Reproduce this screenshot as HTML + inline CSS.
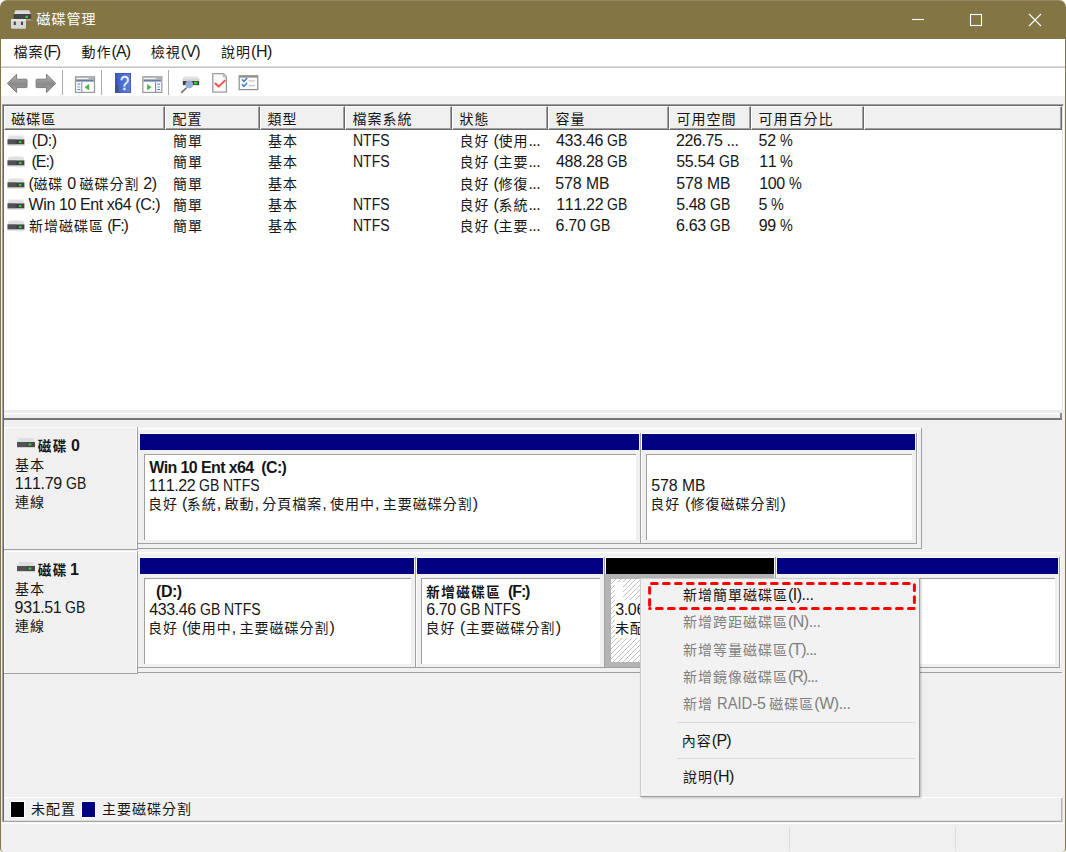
<!DOCTYPE html>
<html lang="zh-Hant">
<head>
<meta charset="utf-8">
<title>磁碟管理</title>
<style>
html,body{margin:0;padding:0;}
body{width:1066px;height:852px;overflow:hidden;background:#fff;position:relative;
  font-family:"Liberation Sans","Noto Sans CJK TC",sans-serif;font-size:15px;color:#161616;font-kerning:none;}
.a{position:absolute;}
.t{position:absolute;white-space:nowrap;line-height:20px;height:20px;font-size:16px;letter-spacing:-0.45px;}
.b{font-weight:bold;}
.c{font-size:14px;letter-spacing:1px;}
.b .c{font-size:13.5px;letter-spacing:1.5px;}
.u{display:inline-block;letter-spacing:0;transform:scaleX(.875);transform-origin:0 50%;}
#client{left:0;top:39px;width:1066px;height:813px;box-sizing:border-box;background:#f0f0f0;border-left:1px solid #847544;border-right:1px solid #847544;border-radius:0 0 4px 4px;}
#title{left:0;top:0;width:1066px;height:39px;background:#847544;border-radius:7px 7px 0 0;box-shadow:inset 0 1px 0 rgba(255,255,255,.13);}
#title .cap{left:36.5px;top:9px;color:#fff;}
#menubar{left:1px;top:39px;width:1064px;height:27px;background:#fff;}
#menuline{left:1px;top:66px;width:1064px;height:2px;background:linear-gradient(#d9dadb 0,#d9dadb 50%,#c6c8ca 50%,#c6c8ca 100%);}
#toolbar{left:1px;top:68px;width:1064px;height:28px;background:#fff;}
.sep{position:absolute;top:70px;width:1px;height:25px;background:#adadad;}
#list{left:2px;top:104px;width:1062px;height:306px;background:#fff;box-sizing:border-box;
  border-top:1px solid #a0a0a0;border-left:1px solid #a0a0a0;border-right:1px solid #fff;
  box-shadow:inset 1px 1px 0 #696969, inset -1px 0 0 #e3e3e3;}
.hc{position:absolute;top:106px;height:24px;box-sizing:border-box;background:#f0f0f0;
  border-top:1px solid #fff;border-left:1px solid #fff;border-right:1px solid #696969;border-bottom:1px solid #696969;
  box-shadow:inset -1px -1px 0 #a0a0a0;}

.hatch{background-color:#fff;background-image:repeating-linear-gradient(135deg,#fff 0,#fff 2.86px,#c2c2c2 2.86px,#c2c2c2 3.536px);}
#cm{left:640px;top:578px;width:280px;height:219px;box-sizing:border-box;background:#f2f2f2;border:1px solid #cfcfcf;border-right-color:#9a9a9a;border-bottom-color:#9a9a9a;box-shadow:1px 1px 2px rgba(0,0,0,.25);}
</style>
</head>
<body>
<div id="client" class="a"></div>
<div id="title" class="a"><div class="t cap"><span class="c">磁碟管理</span></div></div>
<div id="menubar" class="a"></div><div id="menuline" class="a"></div><div id="toolbar" class="a"></div>
<div class="t" style="left:13.6px;top:42px;letter-spacing:-1.46px"><span class="c">檔案</span>(F)</div>
<div class="t" style="left:81.6px;top:42px;letter-spacing:-0.92px"><span class="c">動作</span>(A)</div>
<div class="t" style="left:150.8px;top:42px;letter-spacing:-0.73px"><span class="c">檢視</span>(V)</div>
<div class="t" style="left:221.0px;top:42px;letter-spacing:-0.41px"><span class="c">說明</span>(H)</div>
<div class="sep" style="left:62px"></div>
<div class="sep" style="left:101px"></div>
<div class="sep" style="left:168px"></div>
<svg class="a" style="left:10px;top:9px" width="22" height="21" viewBox="10 9 22 21"><path d="M15.5 10.2h13.5l2 4H13.8z" fill="#d9dbdd"/><rect x="13.7" y="14" width="17.4" height="5.6" fill="#454547"/><rect x="13.7" y="19.3" width="17.4" height="1" fill="#c9c9c9"/><rect x="25.4" y="15.8" width="2.4" height="2.2" fill="#35d335"/><rect x="11" y="19.2" width="15" height="9.6" rx="1" fill="#d6d6d6"/><rect x="11" y="19.2" width="15" height="1.6" fill="#ececec"/><rect x="13.8" y="21.6" width="2" height="3.4" fill="#444"/><rect x="21" y="21.6" width="2" height="3.4" fill="#444"/></svg>
<svg class="a" style="left:900px;top:0" width="166" height="39" viewBox="900 0 166 39" fill="none" stroke="#fff" stroke-width="1.1"><path d="M912 19.5h12"/><rect x="970.5" y="14.5" width="11" height="11"/><path d="M1029 14l12 12M1041 14l-12 12"/></svg>
<svg class="a" style="left:0;top:67px" width="270" height="29" viewBox="0 67 270 29"><defs><linearGradient id="ga" x1="0" y1="0" x2="0" y2="1"><stop offset="0" stop-color="#b4b4b4"/><stop offset=".55" stop-color="#8a8a8a"/><stop offset="1" stop-color="#a8a8a8"/></linearGradient><linearGradient id="gh" x1="0" y1="0" x2="1" y2="0"><stop offset="0" stop-color="#3a4fb8"/><stop offset=".3" stop-color="#4a68cf"/><stop offset="1" stop-color="#5b80dc"/></linearGradient></defs><path d="M7.3 83.4L16.6 74.3V79.2H26.2a.8.8 0 0 1 .8.8V86.8a.8.8 0 0 1-.8.8H16.6V92.5z" fill="url(#ga)" stroke="#7d7d7d" stroke-width="1" stroke-linejoin="round"/><path d="M55.8 83.4L46.5 74.3V79.2H36.9a.8.8 0 0 0-.8.8V86.8a.8.8 0 0 0 .8.8H46.5V92.5z" fill="url(#ga)" stroke="#7d7d7d" stroke-width="1" stroke-linejoin="round"/><rect x="75.5" y="76.8" width="19" height="15.6" fill="#fff" stroke="#979797" stroke-width="1.2"/><rect x="76" y="77.3" width="18" height="4.8" fill="#aab0b8"/><rect x="76.5" y="78" width="12" height="1" fill="#f4f4f4"/><rect x="76.5" y="80" width="17" height="1" fill="#5f7fa8"/><rect x="81.2" y="82.2" width="1.1" height="10" fill="#8d97a5"/><rect x="77.3" y="83.6" width="3" height="1.1" fill="#4f86c9"/><rect x="77.3" y="86.4" width="3" height="1.1" fill="#7ea6d6"/><rect x="77.3" y="89" width="3" height="1.1" fill="#4f86c9"/><path d="M84.6 87.3L89.2 83.8V90.6z" fill="#49b649"/><rect x="115.4" y="73.4" width="15.2" height="19" fill="url(#gh)" stroke="#3446ae" stroke-width=".8"/><rect x="115" y="85" width="3.4" height="7.8" fill="#3a5580"/><text x="124.6" y="89.8" font-family="Liberation Sans,sans-serif" font-size="20" fill="#eef2fb" stroke="#eef2fb" stroke-width=".3" text-anchor="middle" transform="translate(124.6 0) scale(.82 1) translate(-124.6 0)">?</text><rect x="142.8" y="76.8" width="19" height="15.6" fill="#fff" stroke="#979797" stroke-width="1.2"/><rect x="143.3" y="77.3" width="18" height="4.8" fill="#aab0b8"/><rect x="143.8" y="78" width="12" height="1" fill="#f4f4f4"/><rect x="143.8" y="80" width="17" height="1" fill="#5f7fa8"/><rect x="155" y="82.2" width="1.1" height="10" fill="#6d87a8"/><rect x="157.2" y="83.6" width="3" height="1.1" fill="#4f86c9"/><rect x="157.2" y="86.4" width="3" height="1.1" fill="#7ea6d6"/><rect x="157.2" y="89" width="3" height="1.1" fill="#4f86c9"/><path d="M151.4 87.3L147.2 83.8V90.6z" fill="#49b649"/><path d="M184 76.6h13.6l1.6 2.6h-16.8z" fill="#dfe1e3"/><rect x="182.4" y="79" width="17.2" height="6.8" fill="#d4d6d8"/><rect x="183" y="81" width="16" height="4" fill="#3f3f41"/><rect x="194" y="81.6" width="3.4" height="2.8" fill="#28d428"/><path d="M186.2 88L181.6 92.4" stroke="#6a6f78" stroke-width="1.6" stroke-linecap="round"/><circle cx="189.2" cy="84.4" r="3.5" fill="#8fb2de" stroke="#9fb0c8" stroke-width="1"/><path d="M212.8 73.6H223.5L226.4 76.6V92.2H212.8z" fill="#fafafa" stroke="#9a9a9a" stroke-width="1.3" stroke-linejoin="round"/><path d="M223.2 73.8V76.9H226.2" fill="none" stroke="#b0b0b0" stroke-width="1"/><path d="M215.4 83.6L218.7 86.6L224.8 80.6" fill="none" stroke="#f0524f" stroke-width="2" stroke-linecap="round" stroke-linejoin="round"/><rect x="239.2" y="75.8" width="18.6" height="13.8" fill="#fbfbfb" stroke="#8e8e8e" stroke-width="1.2"/><rect x="239.2" y="75.8" width="18.6" height="1.8" fill="#8e8e8e"/><path d="M242.3 79.8L243.8 81.4L246.6 78.4M242.3 84.8L243.8 86.4L246.6 83.4" fill="none" stroke="#3f7ad6" stroke-width="1.5" stroke-linecap="round" stroke-linejoin="round"/><path d="M248.6 80.8h6.2M248.6 85.7h6.2" stroke="#c9c9c9" stroke-width="1.2"/></svg>
<div id="list" class="a"></div>
<div class="hc" style="left:4px;width:161px"></div>
<div class="t" style="left:11.3px;top:109px"><span class="c">磁碟區</span></div>
<div class="hc" style="left:165px;width:95px"></div>
<div class="t" style="left:172.5px;top:109px"><span class="c">配置</span></div>
<div class="hc" style="left:260px;width:85px"></div>
<div class="t" style="left:267.5px;top:109px"><span class="c">類型</span></div>
<div class="hc" style="left:345px;width:107px"></div>
<div class="t" style="left:352.5px;top:109px"><span class="c">檔案系統</span></div>
<div class="hc" style="left:452px;width:96px"></div>
<div class="t" style="left:459.5px;top:109px"><span class="c">狀態</span></div>
<div class="hc" style="left:548px;width:121px"></div>
<div class="t" style="left:555.5px;top:109px"><span class="c">容量</span></div>
<div class="hc" style="left:669px;width:82px"></div>
<div class="t" style="left:676.5px;top:109px"><span class="c">可用空間</span></div>
<div class="hc" style="left:751px;width:113px"></div>
<div class="t" style="left:758.5px;top:109px"><span class="c">可用百分比</span></div>
<div class="hc" style="left:864px;width:198px"></div>
<svg class="a" style="left:7px;top:135.2px" width="18" height="12" viewBox="0 0 18 12"><path d="M2 0.6h14l1.6 4H0.4z" fill="#dfe1e3"/><rect x="0.6" y="4.4" width="16.8" height="5.2" fill="#444446"/><rect x="0.6" y="4.4" width="8" height="5.2" fill="#5a5a5c" opacity=".6"/><rect x="0.6" y="9.4" width="16.8" height="1.2" fill="#d4d4d4"/><rect x="12" y="5.9" width="2.4" height="2.2" fill="#2fd22f"/></svg>
<div class="t" style="left:27.8px;top:131.2px;letter-spacing:-0.45px">&nbsp;(D:)</div>
<div class="t" style="left:173px;top:131.2px"><span class="c">簡單</span></div>
<div class="t" style="left:268px;top:131.2px"><span class="c">基本</span></div>
<div class="t" style="left:352.6px;top:131.2px;letter-spacing:-0.45px"><span class="u" style="margin-right:-0.326em">NTFS</span></div>
<div class="t" style="left:459.6px;top:131.2px;letter-spacing:-0.49px"><span class="c">良好</span> (<span class="c">使用</span>...</div>
<div class="t" style="left:556.0px;top:131.2px;letter-spacing:-0.31px">433.46 <span class="u" style="margin-right:-0.181em">GB</span></div>
<div class="t" style="left:676.1px;top:131.2px;letter-spacing:-0.42px">226.75 ...</div>
<div class="t" style="left:758.6px;top:131.2px;letter-spacing:-0.27px">52 <span class="u" style="transform:scaleX(0.898);margin-right:-0.091em">%</span></div>
<svg class="a" style="left:7px;top:156.45px" width="18" height="12" viewBox="0 0 18 12"><path d="M2 0.6h14l1.6 4H0.4z" fill="#dfe1e3"/><rect x="0.6" y="4.4" width="16.8" height="5.2" fill="#444446"/><rect x="0.6" y="4.4" width="8" height="5.2" fill="#5a5a5c" opacity=".6"/><rect x="0.6" y="9.4" width="16.8" height="1.2" fill="#d4d4d4"/><rect x="12" y="5.9" width="2.4" height="2.2" fill="#2fd22f"/></svg>
<div class="t" style="left:28.0px;top:152.45px;letter-spacing:-0.98px">&nbsp;(E:)</div>
<div class="t" style="left:173px;top:152.45px"><span class="c">簡單</span></div>
<div class="t" style="left:268px;top:152.45px"><span class="c">基本</span></div>
<div class="t" style="left:352.6px;top:152.45px;letter-spacing:-0.45px"><span class="u" style="margin-right:-0.326em">NTFS</span></div>
<div class="t" style="left:459.6px;top:152.45px;letter-spacing:-0.49px"><span class="c">良好</span> (<span class="c">主要</span>...</div>
<div class="t" style="left:556.0px;top:152.45px;letter-spacing:-0.31px">488.28 <span class="u" style="margin-right:-0.181em">GB</span></div>
<div class="t" style="left:676.2px;top:152.45px;letter-spacing:-0.34px">55.54 <span class="u" style="margin-right:-0.181em">GB</span></div>
<div class="t" style="left:759.2px;top:152.45px;letter-spacing:-0.45px">11 <span class="u" style="transform:scaleX(0.898);margin-right:-0.091em">%</span></div>
<svg class="a" style="left:7px;top:177.7px" width="18" height="12" viewBox="0 0 18 12"><path d="M2 0.6h14l1.6 4H0.4z" fill="#dfe1e3"/><rect x="0.6" y="4.4" width="16.8" height="5.2" fill="#444446"/><rect x="0.6" y="4.4" width="8" height="5.2" fill="#5a5a5c" opacity=".6"/><rect x="0.6" y="9.4" width="16.8" height="1.2" fill="#d4d4d4"/><rect x="12" y="5.9" width="2.4" height="2.2" fill="#2fd22f"/></svg>
<div class="t" style="left:28.6px;top:173.7px;letter-spacing:-0.56px">(<span class="c">磁碟</span> 0 <span class="c">磁碟分割</span> 2)</div>
<div class="t" style="left:173px;top:173.7px"><span class="c">簡單</span></div>
<div class="t" style="left:268px;top:173.7px"><span class="c">基本</span></div>
<div class="t" style="left:459.6px;top:173.7px;letter-spacing:-0.49px"><span class="c">良好</span> (<span class="c">修復</span>...</div>
<div class="t" style="left:555.2px;top:173.7px;letter-spacing:-0.07px">578 <span class="u" style="transform:scaleX(0.979);margin-right:-0.032em">MB</span></div>
<div class="t" style="left:676.2px;top:173.7px;letter-spacing:-0.17px">578 <span class="u" style="transform:scaleX(0.979);margin-right:-0.032em">MB</span></div>
<div class="t" style="left:759.2px;top:173.7px;letter-spacing:-0.40px">100 <span class="u" style="transform:scaleX(0.898);margin-right:-0.091em">%</span></div>
<svg class="a" style="left:7px;top:198.95px" width="18" height="12" viewBox="0 0 18 12"><path d="M2 0.6h14l1.6 4H0.4z" fill="#dfe1e3"/><rect x="0.6" y="4.4" width="16.8" height="5.2" fill="#444446"/><rect x="0.6" y="4.4" width="8" height="5.2" fill="#5a5a5c" opacity=".6"/><rect x="0.6" y="9.4" width="16.8" height="1.2" fill="#d4d4d4"/><rect x="12" y="5.9" width="2.4" height="2.2" fill="#2fd22f"/></svg>
<div class="t" style="left:28.6px;top:194.95px;letter-spacing:-0.42px">Win 10 Ent x64 (C:)</div>
<div class="t" style="left:173px;top:194.95px"><span class="c">簡單</span></div>
<div class="t" style="left:268px;top:194.95px"><span class="c">基本</span></div>
<div class="t" style="left:352.6px;top:194.95px;letter-spacing:-0.45px"><span class="u" style="margin-right:-0.326em">NTFS</span></div>
<div class="t" style="left:459.6px;top:194.95px;letter-spacing:-0.49px"><span class="c">良好</span> (<span class="c">系統</span>...</div>
<div class="t" style="left:556.3px;top:194.95px;letter-spacing:-0.34px">111.22 <span class="u" style="margin-right:-0.181em">GB</span></div>
<div class="t" style="left:676.2px;top:194.95px;letter-spacing:-0.45px">5.48 <span class="u" style="margin-right:-0.181em">GB</span></div>
<div class="t" style="left:758.6px;top:194.95px;letter-spacing:-0.44px">5 <span class="u" style="transform:scaleX(0.898);margin-right:-0.091em">%</span></div>
<svg class="a" style="left:7px;top:220.2px" width="18" height="12" viewBox="0 0 18 12"><path d="M2 0.6h14l1.6 4H0.4z" fill="#dfe1e3"/><rect x="0.6" y="4.4" width="16.8" height="5.2" fill="#444446"/><rect x="0.6" y="4.4" width="8" height="5.2" fill="#5a5a5c" opacity=".6"/><rect x="0.6" y="9.4" width="16.8" height="1.2" fill="#d4d4d4"/><rect x="12" y="5.9" width="2.4" height="2.2" fill="#2fd22f"/></svg>
<div class="t" style="left:29.0px;top:216.2px;letter-spacing:-1.12px"><span class="c">新增磁碟區</span> (F:)</div>
<div class="t" style="left:173px;top:216.2px"><span class="c">簡單</span></div>
<div class="t" style="left:268px;top:216.2px"><span class="c">基本</span></div>
<div class="t" style="left:352.6px;top:216.2px;letter-spacing:-0.45px"><span class="u" style="margin-right:-0.326em">NTFS</span></div>
<div class="t" style="left:459.6px;top:216.2px;letter-spacing:-0.49px"><span class="c">良好</span> (<span class="c">主要</span>...</div>
<div class="t" style="left:555.5px;top:216.2px;letter-spacing:-0.26px">6.70 <span class="u" style="margin-right:-0.181em">GB</span></div>
<div class="t" style="left:676.1px;top:216.2px;letter-spacing:-0.39px">6.63 <span class="u" style="margin-right:-0.181em">GB</span></div>
<div class="t" style="left:758.7px;top:216.2px;letter-spacing:-0.30px">99 <span class="u" style="transform:scaleX(0.898);margin-right:-0.091em">%</span></div>
<div class="a" style="left:2px;top:104px;width:1px;height:718px;background:#a0a0a0"></div>
<div class="a" style="left:3px;top:105px;width:1px;height:717px;background:#696969"></div>
<div class="a" style="left:4px;top:410px;width:1059px;height:3px;background:#ebebeb"></div>
<div class="a" style="left:4px;top:413px;width:1058px;height:1px;background:#fff"></div>
<div class="a" style="left:4px;top:418px;width:1058px;height:2px;background:#767676"></div>
<div class="a" style="left:1060px;top:413px;width:2px;height:6px;background:#888"></div>
<div class="a" style="left:4px;top:427px;width:133px;height:122px;background:#f0f0f0;border-top:1px solid #fff;border-left:1px solid #fff;box-sizing:border-box"></div>
<div class="a" style="left:136px;top:427px;width:1px;height:122px;background:#fff"></div>
<div class="a" style="left:137px;top:427px;width:1px;height:123px;background:#a0a0a0"></div>
<div class="a" style="left:4px;top:549px;width:134px;height:1px;background:#a0a0a0"></div>
<div class="a" style="left:138px;top:428px;width:783px;height:1px;background:#fff"></div>
<div class="a" style="left:138px;top:429px;width:783px;height:1px;background:#f7f7f7"></div>
<div class="a" style="left:138px;top:543px;width:779px;height:1px;background:#a0a0a0"></div>
<div class="a" style="left:138px;top:548px;width:783px;height:1px;background:#a0a0a0"></div>
<svg class="a" style="left:17px;top:438px" width="18" height="10" viewBox="0 0 18 10"><path d="M2 0h14l2 4H0z" fill="#dcdfe2"/><rect x="0" y="4" width="18" height="5" fill="#48484a"/><rect x="0" y="4" width="9" height="5" fill="#5a5a5c" opacity=".6"/><rect x="0" y="9" width="18" height="1" fill="#cfcfcf"/><rect x="11.6" y="5.4" width="2.6" height="2.2" fill="#2fd22f"/></svg>
<div class="t b" style="left:37.8px;top:436px;letter-spacing:-1.16px"><span class="c">磁碟</span> 0</div>
<div class="t" style="left:15px;top:455px"><span class="c">基本</span></div>
<div class="t" style="left:14.8px;top:474px;letter-spacing:-0.30px">111.79 <span class="u" style="margin-right:-0.181em">GB</span></div>
<div class="t" style="left:15px;top:492px"><span class="c">連線</span></div>
<div class="a" style="left:140px;top:433px;width:499px;height:1px;background:#fff"></div>
<div class="a" style="left:140px;top:434px;width:499px;height:16px;background:#000080"></div>
<div class="a" style="left:640px;top:433px;width:1px;height:110px;background:#a0a0a0"></div>
<div class="a" style="left:641px;top:433px;width:1px;height:110px;background:#fbfbfb"></div>
<div class="a" style="left:144px;top:454px;width:492px;height:86px;background:#fff;border-top:1px solid #a0a0a0;border-left:1px solid #a0a0a0;box-sizing:border-box"></div>
<div class="t b" style="left:149.2px;top:458px;letter-spacing:-0.61px">Win 10 Ent x64&nbsp; (C:)</div>
<div class="t" style="left:148.8px;top:475.8px;letter-spacing:-0.44px">111.22 <span class="u" style="margin-right:-0.181em">GB</span> <span class="u" style="margin-right:-0.326em">NTFS</span></div>
<div class="t" style="left:148.0px;top:494.2px;letter-spacing:-0.57px"><span class="c">良好</span> (<span class="c">系統</span>, <span class="c">啟動</span>, <span class="c">分頁檔案</span>, <span class="c">使用中</span>, <span class="c">主要磁碟分割</span>)</div>
<div class="a" style="left:642px;top:433px;width:273px;height:1px;background:#fff"></div>
<div class="a" style="left:642px;top:434px;width:273px;height:16px;background:#000080"></div>
<div class="a" style="left:916px;top:433px;width:1px;height:110px;background:#a0a0a0"></div>
<div class="a" style="left:917px;top:433px;width:1px;height:110px;background:#fbfbfb"></div>
<div class="a" style="left:646px;top:454px;width:266px;height:86px;background:#fff;border-top:1px solid #a0a0a0;border-left:1px solid #a0a0a0;box-sizing:border-box"></div>
<div class="t" style="left:651.2px;top:475.8px;letter-spacing:-0.07px">578 <span class="u" style="transform:scaleX(0.979);margin-right:-0.032em">MB</span></div>
<div class="t" style="left:650.2px;top:494.2px;letter-spacing:0.27px"><span class="c">良好</span> (<span class="c">修復磁碟分割</span>)</div>
<div class="a" style="left:921px;top:428px;width:1px;height:121px;background:#a0a0a0"></div>
<div class="a" style="left:4px;top:551px;width:133px;height:122px;background:#f0f0f0;border-top:1px solid #fff;border-left:1px solid #fff;box-sizing:border-box"></div>
<div class="a" style="left:136px;top:551px;width:1px;height:122px;background:#fff"></div>
<div class="a" style="left:137px;top:551px;width:1px;height:123px;background:#a0a0a0"></div>
<div class="a" style="left:4px;top:673px;width:134px;height:1px;background:#a0a0a0"></div>
<div class="a" style="left:138px;top:552px;width:924px;height:1px;background:#fff"></div>
<div class="a" style="left:138px;top:553px;width:924px;height:1px;background:#f7f7f7"></div>
<div class="a" style="left:138px;top:667px;width:922px;height:1px;background:#a0a0a0"></div>
<div class="a" style="left:138px;top:672px;width:924px;height:1px;background:#a0a0a0"></div>
<svg class="a" style="left:17px;top:562px" width="18" height="10" viewBox="0 0 18 10"><path d="M2 0h14l2 4H0z" fill="#dcdfe2"/><rect x="0" y="4" width="18" height="5" fill="#48484a"/><rect x="0" y="4" width="9" height="5" fill="#5a5a5c" opacity=".6"/><rect x="0" y="9" width="18" height="1" fill="#cfcfcf"/><rect x="11.6" y="5.4" width="2.6" height="2.2" fill="#2fd22f"/></svg>
<div class="t b" style="left:37.8px;top:560px;letter-spacing:-2.25px"><span class="c">磁碟</span> 1</div>
<div class="t" style="left:15px;top:579px"><span class="c">基本</span></div>
<div class="t" style="left:14.6px;top:598px;letter-spacing:-0.36px">931.51 <span class="u" style="margin-right:-0.181em">GB</span></div>
<div class="t" style="left:15px;top:616px"><span class="c">連線</span></div>
<div class="a" style="left:140px;top:557px;width:274px;height:1px;background:#fff"></div>
<div class="a" style="left:140px;top:558px;width:274px;height:16px;background:#000080"></div>
<div class="a" style="left:415px;top:557px;width:1px;height:110px;background:#a0a0a0"></div>
<div class="a" style="left:416px;top:557px;width:1px;height:110px;background:#fbfbfb"></div>
<div class="a" style="left:144px;top:578px;width:267px;height:86px;background:#fff;border-top:1px solid #a0a0a0;border-left:1px solid #a0a0a0;box-sizing:border-box"></div>
<div class="t b" style="left:148.2px;top:582px;letter-spacing:-0.50px">&nbsp; (D:)</div>
<div class="t" style="left:149.2px;top:599.8px;letter-spacing:-0.41px">433.46 <span class="u" style="margin-right:-0.181em">GB</span> <span class="u" style="margin-right:-0.326em">NTFS</span></div>
<div class="t" style="left:148.0px;top:618.2px;letter-spacing:-0.54px"><span class="c">良好</span> (<span class="c">使用中</span>, <span class="c">主要磁碟分割</span>)</div>
<div class="a" style="left:417px;top:557px;width:186px;height:1px;background:#fff"></div>
<div class="a" style="left:417px;top:558px;width:186px;height:16px;background:#000080"></div>
<div class="a" style="left:604px;top:557px;width:1px;height:110px;background:#a0a0a0"></div>
<div class="a" style="left:605px;top:557px;width:1px;height:110px;background:#fbfbfb"></div>
<div class="a" style="left:421px;top:578px;width:179px;height:86px;background:#fff;border-top:1px solid #a0a0a0;border-left:1px solid #a0a0a0;box-sizing:border-box"></div>
<div class="t b" style="left:426.3px;top:582px;letter-spacing:-1.10px"><span class="c">新增磁碟區</span>&nbsp; (F:)</div>
<div class="t" style="left:426.3px;top:599.8px;letter-spacing:-0.45px">6.70 <span class="u" style="margin-right:-0.181em">GB</span> <span class="u" style="margin-right:-0.326em">NTFS</span></div>
<div class="t" style="left:425.4px;top:618.2px;letter-spacing:0.23px"><span class="c">良好</span> (<span class="c">主要磁碟分割</span>)</div>
<div class="a" style="left:606px;top:557px;width:168px;height:1px;background:#fff"></div>
<div class="a" style="left:606px;top:558px;width:168px;height:16px;background:#000"></div>
<div class="a" style="left:775px;top:557px;width:1px;height:110px;background:#a0a0a0"></div>
<div class="a" style="left:776px;top:557px;width:1px;height:110px;background:#fbfbfb"></div>
<div class="a" style="left:605px;top:574px;width:169px;height:93px;background:#b4b4b4"></div>
<div class="a hatch" style="left:611px;top:578.5px;width:158px;height:83.5px;"></div>
<div class="t" style="left:615px;top:582px;background:#fff">&nbsp;&nbsp;</div>
<div class="t" style="left:615.2px;top:599.8px;background:#fff;letter-spacing:-0.35px">3.06 <span class="u" style="margin-right:-0.181em">GB</span></div>
<div class="t" style="left:615px;top:618.2px;background:#fff"><span class="c">未配置</span></div>
<div class="a" style="left:777px;top:557px;width:281px;height:1px;background:#fff"></div>
<div class="a" style="left:777px;top:558px;width:281px;height:16px;background:#000080"></div>
<div class="a" style="left:1059px;top:557px;width:1px;height:110px;background:#a0a0a0"></div>
<div class="a" style="left:1060px;top:557px;width:1px;height:110px;background:#fbfbfb"></div>
<div class="a" style="left:781px;top:578px;width:274px;height:86px;background:#fff;border-top:1px solid #a0a0a0;border-left:1px solid #a0a0a0;box-sizing:border-box"></div>
<div class="a" style="left:4px;top:797px;width:1058px;height:1px;background:#fff"></div>
<div class="a" style="left:4px;top:798px;width:1058px;height:23px;background:#f1f1f1"></div>
<div class="a" style="left:4px;top:820px;width:1058px;height:1px;background:#dedede"></div>
<div class="a" style="left:2px;top:821px;width:1061px;height:1px;background:#a4a4a4"></div>
<div class="a" style="left:1061px;top:798px;width:1px;height:24px;background:#b2b2b2"></div>
<div class="a" style="left:1062px;top:798px;width:1px;height:24px;background:#d4d4d4"></div>
<div class="a" style="left:2px;top:822px;width:1062px;height:1px;background:#f6f6f6"></div>
<div class="a" style="left:1px;top:823px;width:1064px;height:1px;background:#fdfdfd"></div>
<div class="a" style="left:10px;top:801px;width:13px;height:15px;background:#000;border:1px solid #fff"></div>
<div class="t" style="left:31px;top:799px"><span class="c">未配置</span></div>
<div class="a" style="left:81px;top:801px;width:13px;height:15px;background:#000080;border:1px solid #fff"></div>
<div class="t" style="left:102px;top:799px"><span class="c">主要磁碟分割</span></div>
<div class="a" style="left:789px;top:827px;width:1px;height:24px;background:#dcdcdc"></div>
<div class="a" style="left:955px;top:827px;width:1px;height:24px;background:#dcdcdc"></div>
<div id="cm" class="a"></div>
<div class="t" style="left:682.9px;top:585.1px;letter-spacing:-0.50px"><span class="c">新增簡單磁碟區</span>(I)...</div>
<div class="t" style="left:682.9px;top:612.4px;color:#808080;letter-spacing:-0.49px"><span class="c">新增跨距磁碟區</span>(N)...</div>
<div class="t" style="left:682.9px;top:639.7px;color:#808080;letter-spacing:-0.91px"><span class="c">新增等量磁碟區</span>(T)...</div>
<div class="t" style="left:682.9px;top:667.0px;color:#808080;letter-spacing:-1.02px"><span class="c">新增鏡像磁碟區</span>(R)...</div>
<div class="t" style="left:682.9px;top:694.3px;color:#808080;letter-spacing:-0.49px"><span class="c">新增</span> <span class="u" style="transform:scaleX(0.923);margin-right:-0.184em">RAID</span>-5 <span class="c">磁碟區</span>(W)...</div>
<div class="a" style="left:677px;top:722px;width:238px;height:1px;background:#d9d9d9"></div>
<div class="t" style="left:681.8px;top:731px;letter-spacing:-0.74px"><span class="c">內容</span>(P)</div>
<div class="a" style="left:677px;top:758px;width:238px;height:1px;background:#d9d9d9"></div>
<div class="t" style="left:683.0px;top:766.5px;letter-spacing:-0.45px"><span class="c">說明</span>(H)</div>
<svg class="a" style="left:640px;top:576px" width="290" height="40" viewBox="640 576 290 40" fill="none" stroke="#ff0000" stroke-width="3" stroke-linecap="round" stroke-dasharray="5.7 6.3"><path d="M649.6 583.6H914.4" stroke-dashoffset="10.1"/><path d="M914.4 583.6V608.5" stroke-dashoffset="10.9"/><path d="M649.6 608.5H914.4" stroke-dashoffset="5.1"/><path d="M649.6 583.6V608.5" stroke-dashoffset="8.1"/></svg>
</body>
</html>
